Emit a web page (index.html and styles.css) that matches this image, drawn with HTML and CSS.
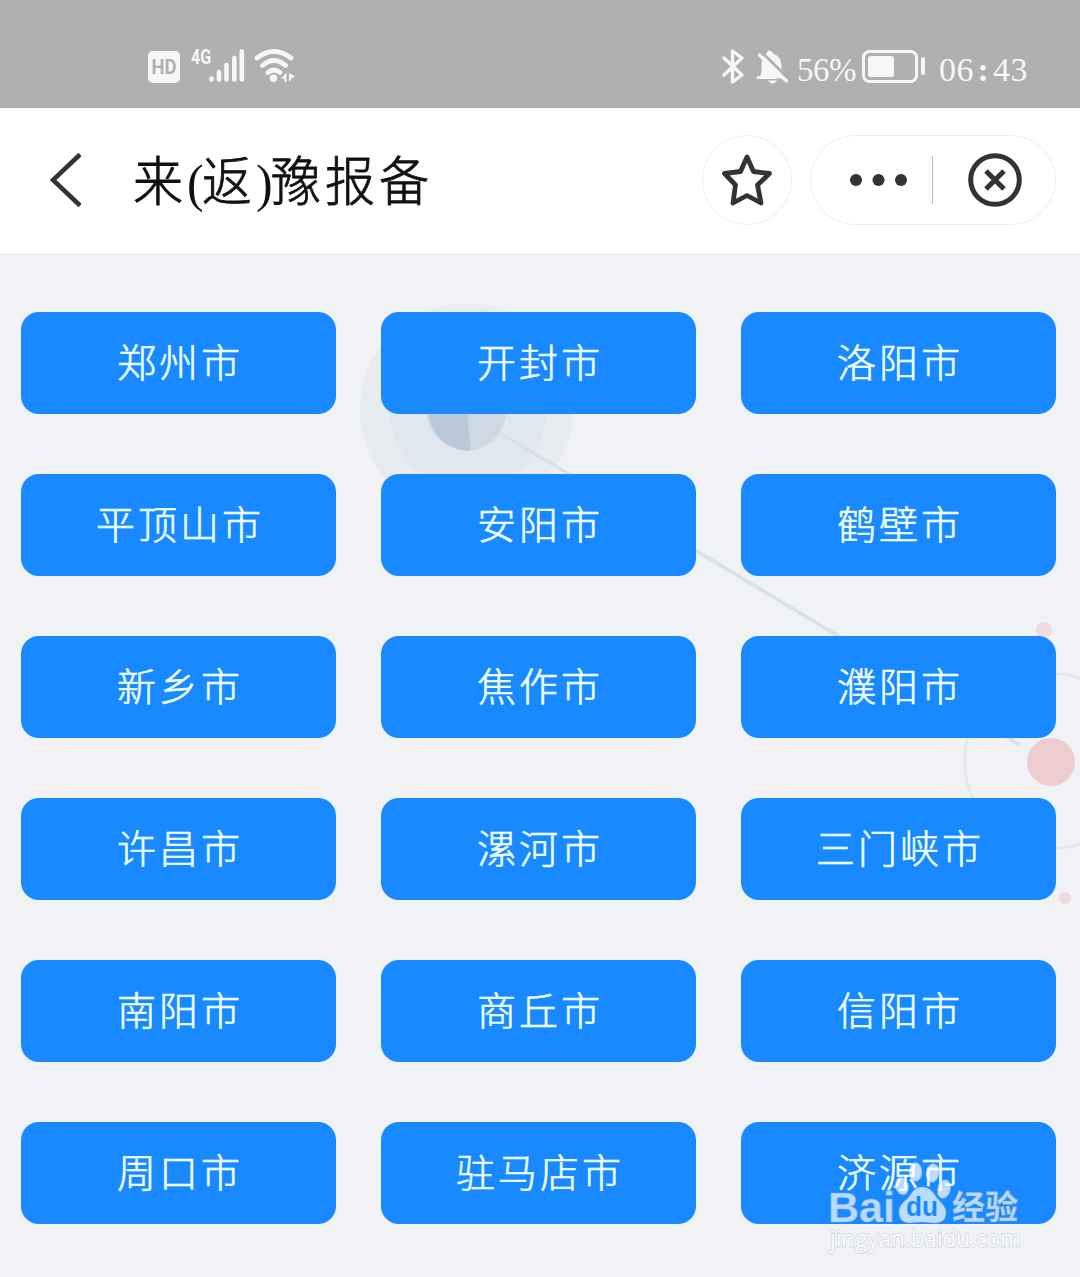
FILE: index.html
```html
<!DOCTYPE html>
<html lang="zh-CN">
<head>
    <meta charset="UTF-8">
    <title>来(返)豫报备</title>
    <link rel="stylesheet" href="styles.css">
</head>
<body>
    <div class="status-bar">
        <svg class="signal" width="150" height="40" viewBox="0 0 150 40" fill="#f7f7f7">
            <rect x="1" y="4" width="32" height="32" rx="5"/>
            <text class="hd" x="4.5" y="27" textLength="25" lengthAdjust="spacingAndGlyphs">HD</text>
            <text class="net" x="44" y="17" textLength="20" lengthAdjust="spacingAndGlyphs">4G</text>
            <g stroke="#f7f7f7" stroke-width="4.6" stroke-linecap="round">
                <path d="M64.500 31.500v1M72 25v7.500M79.500 18v14.500M87.300 11v21.500M94.800 4.500v28"/>
            </g>
            <g fill="none" stroke="#f7f7f7" stroke-width="4.8" stroke-linecap="round">
                <path d="M110 11q17-13 34 0M115.500 18.500q11.500-10 23 0M121 25.500q6-5 12 0"/>
            </g>
            <circle cx="126.500" cy="31.300" r="3.700"/>
            <path d="M134 31.500l5.500-6v9.500h-2v-3.500zM142 26l6.500 3.500-3 1-3.500 4.500z"/>
        </svg>
        <div class="status-right">
            <svg width="70" height="40" viewBox="0 0 70 40" fill="none" stroke="#f7f7f7" stroke-width="3.400" stroke-linejoin="round" stroke-linecap="round">
                <path d="M4 11l18 17-9.500 7V4l9.500 7L4 28"/>
                <path d="M48 3.500c3 0 4 1 5 3 6 2 8.500 7 8.500 13v12H37.500c4-3 4-6 4-11 0-7 1-12 5-14z" fill="#f7f7f7" stroke="none"/>
                <path d="M38 30.500h16" stroke-width="3"/>
                <path d="M42 5.500L68 31" stroke="#b0b0b0" stroke-width="3"/>
                <path d="M39.500 8L66.500 34" stroke-width="3.200"/>
                <path d="M48 33.500h9q-4.500 6-9 0z" fill="#f7f7f7" stroke="none"/>
            </svg>
            <span class="percent">56%</span>
            <svg class="battery" width="64" height="36" viewBox="0 0 64 36" fill="none">
                <rect x="1.500" y="4.500" width="53" height="30" rx="6" stroke="#f7f7f7" stroke-width="3"/>
                <rect x="6" y="9" width="26" height="21" rx="2.500" fill="#f7f7f7"/>
                <rect x="59" y="10" width="4" height="18" rx="2" fill="#f7f7f7"/>
            </svg>
            <span class="time">06<span class="colon">:</span>43</span>
        </div>
    </div>

    <div class="nav-bar">
        <svg class="back" width="34" height="56" viewBox="0 0 34 56" fill="none" stroke="#333" stroke-width="4.500">
            <path d="M32 2.500L5 28l27 25.500"/>
        </svg>
        <h1>来<span class="paren">(</span>返<span class="paren">)</span>豫报备</h1>
        <button class="star">
            <svg width="54" height="54" viewBox="0 0 54 54" fill="none" stroke="#333" stroke-width="4.800" stroke-linejoin="round">
                <path d="M27 4l6.500 14.500 16 2-12 11.500 3.500 18-14-7.500-14 7.500 2.500-18L4.500 20.500l16-2z"/>
            </svg>
        </button>
        <div class="capsule">
            <svg width="60" height="14" viewBox="0 0 60 14" fill="#333">
                <circle cx="7" cy="7" r="6"/>
                <circle cx="29.500" cy="7" r="6"/>
                <circle cx="52" cy="7" r="6"/>
            </svg>
            <span class="divider"></span>
            <svg width="54" height="54" viewBox="0 0 54 54" fill="none" stroke="#333" stroke-width="5">
                <circle cx="27" cy="27" r="24.300"/>
                <path d="M18 18l18 18M36 18L18 36"/>
            </svg>
        </div>
    </div>

    <div class="content">
        <svg class="backdrop" width="1080" height="1024" viewBox="0 253 1080 1024" fill="none">
            <circle cx="466.500" cy="410" r="106.500" fill="#e8ecf1"/>
            <circle cx="468" cy="411" r="78.500" fill="#e0e7ef"/>
            <circle cx="466.500" cy="411" r="39.500" fill="#ced9e3"/>
            <path d="M466.500 371.500a39.500 39.500 0 0 0 4 79l-3-40z" fill="#b9c9d8"/>
            <path d="M500 433L1020 745" stroke="#dbe1eb" stroke-width="3.500"/>
            <circle cx="1052" cy="761" r="87.500" stroke="#e3e6eb" stroke-width="2.500"/>
            <circle cx="1051" cy="762" r="24" fill="#edcdd0"/>
            <circle cx="1044" cy="630" r="8" fill="#efdadd"/>
            <circle cx="1065" cy="898" r="6" fill="#efdadd"/>
        </svg>
        <div class="city-grid">
            <button>郑州市</button>
            <button>开封市</button>
            <button>洛阳市</button>
            <button>平顶山市</button>
            <button>安阳市</button>
            <button>鹤壁市</button>
            <button>新乡市</button>
            <button>焦作市</button>
            <button>濮阳市</button>
            <button>许昌市</button>
            <button>漯河市</button>
            <button>三门峡市</button>
            <button>南阳市</button>
            <button>商丘市</button>
            <button>信阳市</button>
            <button>周口市</button>
            <button>驻马店市</button>
            <button>济源市</button>
        </div>
        <svg class="watermark" width="200" height="97" viewBox="825 1160 200 97">
            <g fill="#fff" fill-opacity="0.7" stroke="#8fa6c0" stroke-opacity="0.4">
                <ellipse cx="902" cy="1186" rx="6.500" ry="9" transform="rotate(-15 902 1186)"/>
                <ellipse cx="915.500" cy="1172" rx="6.500" ry="9.500"/>
                <ellipse cx="932.500" cy="1173" rx="6.500" ry="9.500" transform="rotate(10 932.500 1173)"/>
                <ellipse cx="944" cy="1189" rx="6.500" ry="9.500" transform="rotate(15 944 1189)"/>
                <path d="M922 1187c9 0 12 7 15 11 4 5 9 8 9 15 0 8-6 10-12 10-5 0-8-1-12-1s-7 1-12 1c-7 0-11-4-11-11s5-10 9-14c4-5 6-11 14-11z"/>
                <text class="wm-bai" x="828" y="1222" textLength="67" lengthAdjust="spacingAndGlyphs">Bai</text>
                <text class="wm-cn" x="952" y="1219" textLength="66" lengthAdjust="spacingAndGlyphs">经验</text>
            </g>
            <text class="wm-du" x="906" y="1216" textLength="32" lengthAdjust="spacingAndGlyphs">du</text>
            <text class="wm-url" x="830" y="1247" textLength="191" lengthAdjust="spacingAndGlyphs">jingyan.baidu.com</text>
        </svg>
    </div>
</body>
</html>
```
FILE: styles.css
```css
* { box-sizing: border-box; }
body {
    margin: 0;
    background-color: #f0f2f6;
    font-family: "Liberation Serif", "Noto Sans CJK SC", sans-serif;
}
button { font-family: inherit; cursor: pointer; }
svg { display: block; flex-shrink: 0; overflow: visible; }

.status-bar {
    display: flex;
    justify-content: space-between;
    height: 108px;
    padding: 47px 51px 0 147px;
    background-color: #b0b0b0;
    color: #f7f7f7;
}
.status-right { display: flex; }
.hd { font: bold 20px Roboto, sans-serif; fill: #b0b0b0; }
.net { font: bold 20px Roboto, sans-serif; }
.percent {
    width: 58px;
    margin: 4px 7px 0 7px;
    font-size: 33px;
    line-height: 38px;
    letter-spacing: -0.5px;
}
.time {
    width: 90px;
    margin: 4px 0 0 13px;
    font-size: 34px;
    line-height: 38px;
    letter-spacing: 0.5px;
    white-space: nowrap;
}
.colon {
    display: inline-block;
    width: 19px;
    font-weight: bold;
    text-align: center;
}

.nav-bar {
    display: flex;
    align-items: center;
    height: 145px;
    padding: 0 24px 2px 48px;
    background-color: white;
}
h1 {
    flex: 1;
    margin: 0 0 0 51px;
    color: #111;
    font-size: 50px;
    font-weight: 300;
    line-height: 70px;
    letter-spacing: 4px;
    white-space: nowrap;
    transform: translateY(3px) scaleY(1.06);
    -webkit-text-stroke: 0.8px #111;
}
.paren {
    display: inline-block;
    width: 15px;
    letter-spacing: 0;
    -webkit-text-stroke: 0;
}
.star {
    display: flex;
    align-items: center;
    justify-content: center;
    width: 90px;
    height: 90px;
    padding: 0;
    border: 1px solid #eee;
    border-radius: 50%;
    background-color: white;
}
.capsule {
    display: flex;
    align-items: center;
    width: 246px;
    height: 90px;
    margin-left: 18px;
    padding-left: 38px;
    border: 1px solid #eee;
    border-radius: 45px;
}
.divider {
    width: 1px;
    height: 48px;
    margin: 0 35px 0 23px;
    background-color: #bbb;
}

.content { position: relative; height: 1024px; }
.backdrop { position: absolute; top: 0; left: 0; }
.city-grid {
    position: relative;
    display: grid;
    grid-template-columns: repeat(3, 315px);
    grid-auto-rows: 102px;
    gap: 60px 45px;
    padding: 59px 0 0 21px;
}
.city-grid button {
    padding: 0 0 6px 3px;
    border: none;
    border-radius: 18px;
    background-color: #1989ff;
    color: #efffff;
    font-size: 39px;
    font-weight: 300;
    letter-spacing: 3px;
    -webkit-text-stroke: 0.6px #efffff;
}

.watermark { position: absolute; top: 907px; left: 825px; }
.wm-bai { font: bold 43px "Liberation Sans", sans-serif; }
.wm-cn { font: bold 33px "Noto Sans CJK SC", sans-serif; }
.wm-du { font: bold 27px "Liberation Sans", sans-serif; fill: #1989ff; }
.wm-url {
    font: 23px "Open Sans", sans-serif;
    fill: #fafbfc;
    stroke: #d4d8de;
    stroke-width: 1.5px;
    paint-order: stroke;
}
```
